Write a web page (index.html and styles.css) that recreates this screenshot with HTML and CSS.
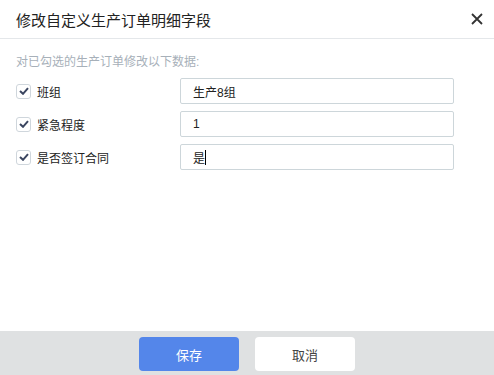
FILE: index.html
```html
<!DOCTYPE html>
<html lang="zh">
<head>
  <meta charset="UTF-8">
  <title>修改自定义生产订单明细字段</title>
  <link rel="stylesheet" href="styles.css">
</head>
<body>
  <div class="dialog">
    <!-- ヘッダー -->
    <div class="dialog-head">
      <h1 class="dialog-title">修改自定义生产订单明细字段</h1>
      <span class="close-btn">
        <svg width="12" height="12" viewBox="0 0 12 12"><path d="M1 1L11 11M11 1L1 11" stroke="#333" stroke-width="1.8" fill="none"/></svg>
      </span>
    </div>

    <!-- 本体 -->
    <div class="dialog-body">
      <p class="hint">对已勾选的生产订单修改以下数据:</p>
      <div class="field-list">
        <div class="field-row">
          <label class="check-label"><span class="check-box"><svg width="10" height="8" viewBox="0 0 10 8"><path d="M1 4L4 6.8L9 1.2" stroke="#3a4560" stroke-width="2" fill="none"/></svg></span>班组</label>
          <div class="text-input">生产8组</div>
        </div>
        <div class="field-row">
          <label class="check-label"><span class="check-box"><svg width="10" height="8" viewBox="0 0 10 8"><path d="M1 4L4 6.8L9 1.2" stroke="#3a4560" stroke-width="2" fill="none"/></svg></span>紧急程度</label>
          <div class="text-input">1</div>
        </div>
        <div class="field-row">
          <label class="check-label"><span class="check-box"><svg width="10" height="8" viewBox="0 0 10 8"><path d="M1 4L4 6.8L9 1.2" stroke="#3a4560" stroke-width="2" fill="none"/></svg></span>是否签订合同</label>
          <div class="text-input">是<span class="caret"></span></div>
        </div>
      </div>
    </div>

    <!-- フッター -->
    <div class="dialog-foot">
      <button class="btn btn-primary">保存</button>
      <button class="btn btn-plain">取消</button>
    </div>
  </div>
</body>
</html>
```

FILE: styles.css
```css
/* ========== 共通 ========== */
body {
  margin: 0;
  background: #fff;
  color: #333;
  font-family: "Liberation Sans", "Noto Sans CJK SC", sans-serif;
}

.dialog {
  width: 494px;
  height: 375px;
  display: flex;
  flex-direction: column;
}

/* ========== ヘッダー ========== */
.dialog-head {
  height: 39px;
  border-bottom: 1px solid #e4e7ea;
  display: flex;
  align-items: center;
  justify-content: space-between;
  padding: 0 9px 0 16px;
  box-sizing: border-box;
  flex-shrink: 0;
}
.dialog-title {
  margin: 0;
  font-size: 15px;
  font-weight: normal;
  color: #222;
}
.close-btn {
  width: 16px;
  height: 16px;
  display: flex;
  align-items: center;
  justify-content: center;
}

/* ========== 本体 ========== */
.dialog-body {
  flex: 1;
  padding: 15px 16px 0 16px;
}
.hint {
  margin: 0 0 7px 0;
  font-size: 12px;
  color: #a7b0b9;
  line-height: 17px;
}
.field-list {
  display: flex;
  flex-direction: column;
  gap: 7px;
}
.field-row {
  display: flex;
  align-items: center;
  height: 26px;
}
.check-label {
  width: 164px;
  display: flex;
  align-items: center;
  gap: 6px;
  font-size: 12px;
  color: #222;
}
.check-box {
  width: 13px;
  height: 13px;
  border: 1px solid #cfd6dc;
  border-radius: 3px;
  display: flex;
  align-items: center;
  justify-content: center;
  background: #fff;
}
.text-input {
  width: 274px;
  height: 26px;
  box-sizing: border-box;
  border: 1px solid #cdd6da;
  border-radius: 2px;
  padding: 0 12px;
  display: flex;
  align-items: center;
  font-size: 12px;
  color: #222;
}
.caret {
  display: inline-block;
  width: 1px;
  height: 15px;
  background: #000;
}

/* ========== フッター ========== */
.dialog-foot {
  height: 44px;
  background: #dfe1e2;
  display: flex;
  justify-content: center;
  align-items: center;
  gap: 16px;
  flex-shrink: 0;
  padding-top: 2px;
  box-sizing: border-box;
}
.btn {
  width: 100px;
  height: 34px;
  border: none;
  border-radius: 4px;
  font-size: 13px;
  font-family: "Liberation Sans", "Noto Sans CJK SC", sans-serif;
}
.btn-primary {
  background: #5486ea;
  color: #fff;
}
.btn-plain {
  background: #fff;
  color: #444;
}
```
